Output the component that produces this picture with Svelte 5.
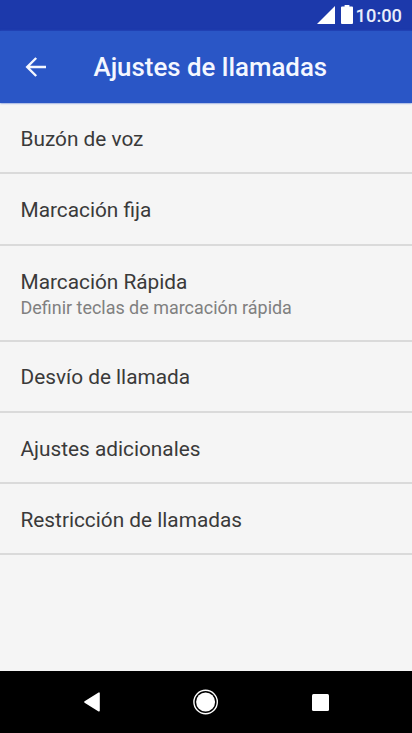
<script>
  const items = [
    { title: 'Buzón de voz' },
    { title: 'Marcación fija' },
    { title: 'Marcación Rápida', summary: 'Definir teclas de marcación rápida' },
    { title: 'Desvío de llamada' },
    { title: 'Ajustes adicionales' },
    { title: 'Restricción de llamadas' }
  ];
</script>

<div class="screen">
  <div class="status">
    <svg class="signal" width="18" height="18" viewBox="0 0 18 18"><path d="M0 18 18 0V18Z" fill="#fff" /></svg>
    <svg class="battery" width="12" height="19" viewBox="0 0 12 19"><path d="M3.6 0H8.4V1.5H11Q12 1.5 12 2.5V18Q12 19 11 19H1Q0 19 0 18V2.5Q0 1.5 1 1.5H3.6Z" fill="#fff" /></svg>
    <span class="clock">10:00</span>
  </div>
  <header>
    <button aria-label="Atrás">
      <svg width="22" height="20" viewBox="0 0 22 20" fill="none" stroke="#f4f7ff" stroke-width="2.4"><path d="M21 10H2.2M11.2 1 2.2 10 11.2 19" /></svg>
    </button>
    <h1>Ajustes de llamadas</h1>
  </header>
  <main>
    {#each items as item}
      <div class="row" class:tall={item.summary}>
        <div class="title">{item.title}</div>
        {#if item.summary}<div class="summary">{item.summary}</div>{/if}
      </div>
    {/each}
  </main>
  <nav>
    <svg width="16" height="20" viewBox="0 0 16 20"><path d="M1 10 15 1.2V18.8Z" fill="#fff" stroke="#fff" stroke-width="1.6" stroke-linejoin="round" /></svg>
    <svg width="26" height="26" viewBox="0 0 26 26"><circle cx="12.6" cy="13" r="11.7" fill="none" stroke="#fff" stroke-width="1.4" /><circle cx="12.6" cy="13" r="9.5" fill="#fff" /></svg>
    <svg width="17" height="17" viewBox="0 0 17 17"><rect width="17" height="17" rx="1.5" fill="#fff" /></svg>
  </nav>
</div>

<style>
  .screen {
    width: 412px;
    height: 733px;
    display: flex;
    flex-direction: column;
    overflow: hidden;
    background: #f5f5f5;
    font-family: Roboto, sans-serif;
  }
  .status {
    height: 31px;
    flex: none;
    box-sizing: border-box;
    padding: 5px 10px 0 0;
    display: flex;
    justify-content: flex-end;
    align-items: flex-start;
    background: #1c39ab;
  }
  .signal {
    margin: 1px 6px 0 0;
  }
  .battery {
    margin-right: 3px;
  }
  .clock {
    color: #e9edfa;
    font-size: 18.3px;
    line-height: 22px;
    font-weight: 500;
  }
  header {
    height: 72px;
    flex: none;
    display: flex;
    align-items: center;
    background: #2a56c6;
    box-shadow: 0 0 2px #2a56c6;
  }
  button {
    margin: 0 0 1px 25px;
    padding: 0;
    border: 0;
    background: none;
    width: 68.5px;
    display: flex;
  }
  h1 {
    margin: 0 0 1px;
    color: #f4f7ff;
    font-size: 25.85px;
    line-height: 32px;
    font-weight: 500;
  }
  main {
    flex: 1;
  }
  .row {
    height: 71.3px;
    box-sizing: border-box;
    padding: 2px 20.5px 0;
    border-bottom: 2px solid #dadada;
    display: flex;
    flex-direction: column;
    justify-content: center;
  }
  .row.tall {
    height: 96px;
  }
  .title {
    color: #3a3a3a;
    font-size: 20.8px;
    line-height: 28px;
  }
  .summary {
    color: #808080;
    font-size: 17.95px;
    line-height: 24px;
  }
  nav {
    height: 62px;
    flex: none;
    box-sizing: border-box;
    padding: 0 83px 0 84px;
    display: flex;
    align-items: center;
    justify-content: space-between;
    background: #000;
  }
</style>
